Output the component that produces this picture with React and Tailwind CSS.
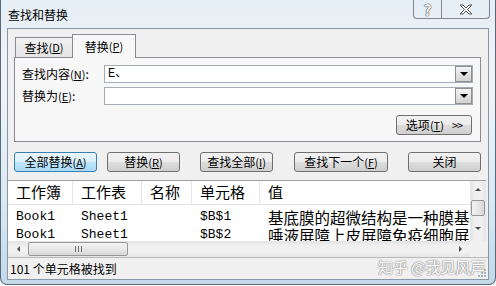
import React from 'react'

const ui = { fontFamily: '"Noto Sans CJK SC", "Liberation Sans", sans-serif' }
const mono = { fontFamily: '"Liberation Mono", "Noto Sans CJK SC", monospace' }

// underlined access key, e.g. (D)
const Key = ({ k }) => (
  <span className="text-[11px]">
    (<u>{k}</u>)
  </span>
)

const Triangle = ({ dir = 'down', size = 4, color = '#000' }) => {
  const pts = {
    down: `0,0 ${size * 2},0 ${size},${size}`,
    up: `0,${size} ${size * 2},${size} ${size},0`,
    left: `${size},0 ${size},${size * 2} 0,${size}`,
    right: `0,0 0,${size * 2} ${size},${size}`,
  }[dir]
  const w = dir === 'down' || dir === 'up' ? size * 2 : size
  const h = dir === 'down' || dir === 'up' ? size : size * 2
  return (
    <svg width={w} height={h} viewBox={`0 0 ${w} ${h}`}>
      <polygon points={pts} fill={color} />
    </svg>
  )
}

const Combo = ({ value }) => (
  <div className="w-[369px] h-[18px] border border-[#a5acb5] bg-white flex items-stretch">
    <div className="flex-1 pl-[3px] text-[12px] leading-[16px] text-black" style={mono}>
      {value}
    </div>
    <div className="w-[17px] border border-[#8e8f8f] bg-[linear-gradient(#f4f4f4,#e2e2e2_50%,#d3d3d3)] flex items-center justify-center">
      <Triangle dir="down" size={4} />
    </div>
  </div>
)

const Btn = ({ children, w, ml, focused }) => (
  <div
    className={`h-[20px] rounded-[3px] border flex items-center justify-center text-[12px] text-black ${
      focused
        ? 'border-[#3c7fb1] bg-[linear-gradient(#eaf6fd,#d9f0fc_50%,#bee6fd_50%,#a7d9f5)]'
        : 'border-[#707070] bg-[linear-gradient(#f2f2f2,#ebebeb_50%,#dddddd_50%,#cfcfcf)]'
    }`}
    style={{ width: w, marginLeft: ml }}
  >
    {children}
  </div>
)

const cols = 'grid grid-cols-[65px_69px_50px_68px_1fr]'

export default function App() {
  const rows = [
    ['Book1', 'Sheet1', '', '$B$1', '基底膜的超微结构是一种膜基底膜'],
    ['Book1', 'Sheet1', '', '$B$2', '唾液屏障上皮屏障免疫细胞屏障'],
  ]

  return (
    <div className="w-[496px] h-[286px] bg-white overflow-hidden" style={ui}>
      <div className="relative w-[496px] h-[285px] border-x border-b border-[#56687a] rounded-b-[7px] bg-[linear-gradient(180deg,#e6eef5,#eef4f9_30%,#dbe9f3_70%,#c3d9ea)]">
        {/* title bar */}
        <div className="h-[28px] flex justify-between">
          <div className="pl-[7px] pt-[6px] text-[12px] leading-[17px] text-black">查找和替换</div>
          <div className="flex mr-[5px] h-[19px]">
            <div className="w-[29px] border border-t-0 border-[#7c8894] rounded-bl-[4px] flex items-center justify-center text-[15px] font-bold text-white leading-none [text-shadow:0_0_1px_#444,0_0_1px_#444,0_0_1px_#444]">
              ?
            </div>
            <div className="w-[48px] border border-l-0 border-t-0 border-[#7c8894] rounded-br-[4px] flex items-center justify-center">
              <svg width="14" height="11" viewBox="0 0 14 11">
                <path
                  d="M1 1h3l3 3 3-3h3l-4.5 4.5L13 10h-3L7 7l-3 3H1l4.5-4.5z"
                  fill="#fff"
                  stroke="#555"
                  strokeWidth="1"
                  strokeLinejoin="round"
                />
              </svg>
            </div>
          </div>
        </div>

        {/* client area */}
        <div className="ml-[6px] w-[482px] h-[252px] border border-[#8a98a6] bg-[#f0f0f0] flex flex-col">
          {/* tabs */}
          <div className="mt-[5px] ml-[6px] h-[23px] flex items-end">
            <div className="ml-[1px] w-[58px] h-[20px] border border-b-0 border-[#898c95] bg-[linear-gradient(#f2f2f2,#e3e3e3)] flex items-center justify-center text-[12px] text-black">
              查找<Key k="D" />
            </div>
            <div className="relative z-10 -ml-px -mb-px w-[64px] h-[24px] border border-b-0 border-[#898c95] bg-[#f7f7f7] flex items-center justify-center text-[12px] text-black">
              替换<Key k="P" />
            </div>
          </div>

          {/* tab page */}
          <div className="ml-[6px] w-[467px] h-[85px] border border-[#898c95] bg-[#f7f7f7] pt-[7px] flex flex-col">
            <div className="flex items-center">
              <div className="pl-[7px] w-[89px] text-[12px] text-black">
                查找内容<Key k="N" />:
              </div>
              <Combo value="E、" />
            </div>
            <div className="mt-[4px] flex items-center">
              <div className="pl-[7px] w-[89px] text-[12px] text-black">
                替换为<Key k="E" />:
              </div>
              <Combo value="" />
            </div>
            <div className="mt-[10px] flex justify-end pr-[8px]">
              <Btn w={76} ml={0}>
                选项<Key k="T" />
                <span className="ml-[8px] text-[11px] tracking-[-1px]">&gt;&gt;</span>
              </Btn>
            </div>
          </div>

          {/* action buttons */}
          <div className="mt-[10px] flex">
            <Btn w={83} ml={6} focused>
              全部替换<Key k="A" />
            </Btn>
            <Btn w={73} ml={10}>
              替换<Key k="R" />
            </Btn>
            <Btn w={73} ml={20}>
              查找全部<Key k="I" />
            </Btn>
            <Btn w={94} ml={21}>
              查找下一个<Key k="F" />
            </Btn>
            <Btn w={73} ml={20}>
              关闭
            </Btn>
          </div>

          {/* results list */}
          <div className="mt-[8px] w-[478px] border-t border-[#a0a0a0] bg-white flex flex-col">
            <div className="h-[60px] flex">
              <div className="w-[462px] overflow-hidden">
                <div className={`${cols} h-[24px] border-b border-[#e5e5e5] text-[15px] text-black`}>
                  {['工作簿', '工作表', '名称', '单元格', '值'].map((h, i) => (
                    <div
                      key={h}
                      className={`pl-[8px] flex items-center whitespace-nowrap ${i < 4 ? 'border-r border-[#e5e5e5]' : ''}`}
                    >
                      {h}
                    </div>
                  ))}
                </div>
                <div className="pt-[2px]">
                  {rows.map((r) => (
                    <div key={r[3]} className={`${cols} h-[18px] items-center text-black`}>
                      <div className="pl-[8px] text-[13px]" style={mono}>{r[0]}</div>
                      <div className="pl-[8px] text-[13px]" style={mono}>{r[1]}</div>
                      <div className="pl-[8px] text-[13px]" style={mono}>{r[2]}</div>
                      <div className="pl-[8px] text-[13px]" style={mono}>{r[3]}</div>
                      <div className="pl-[8px] text-[15.5px] leading-[18px] whitespace-nowrap overflow-hidden">{r[4]}</div>
                    </div>
                  ))}
                </div>
              </div>
              {/* vertical scrollbar */}
              <div className="w-[16px] bg-[linear-gradient(90deg,#e3e3e3,#f0f0f0_30%,#f0f0f0_70%,#e6e6e6)] flex flex-col items-center">
                <div className="h-[17px] flex items-center justify-center">
                  <Triangle dir="up" size={3} color="#4d4d4d" />
                </div>
                <div className="mt-[2px] w-[14px] h-[16px] rounded-[2px] border border-[#979797] bg-[linear-gradient(90deg,#f3f3f3,#e8e8e8_50%,#d6d6d6)]" />
                <div className="flex-1 flex items-center justify-center">
                  <Triangle dir="down" size={3} color="#4d4d4d" />
                </div>
              </div>
            </div>
            {/* horizontal scrollbar */}
            <div className="h-[16px] flex">
              <div className="w-[462px] bg-[linear-gradient(#e3e3e3,#f0f0f0_30%,#f0f0f0_70%,#e6e6e6)] flex items-center">
                <div className="w-[20px] flex justify-center">
                  <Triangle dir="left" size={3} color="#4d4d4d" />
                </div>
                <div className="w-[100px] h-[14px] rounded-[2px] border border-[#979797] bg-[linear-gradient(#f3f3f3,#e8e8e8_50%,#d6d6d6)] flex items-center justify-center gap-[2px]">
                  <div className="w-px h-[6px] bg-[#6e6e6e]" />
                  <div className="w-px h-[6px] bg-[#6e6e6e]" />
                  <div className="w-px h-[6px] bg-[#6e6e6e]" />
                </div>
                <div className="flex-1" />
                <div className="w-[20px] flex justify-center">
                  <Triangle dir="right" size={3} color="#4d4d4d" />
                </div>
              </div>
              <div className="w-[16px] bg-[#f0f0f0]" />
            </div>
          </div>

          {/* status bar */}
          <div className="relative flex-1 border-t border-[#b8b8b8] bg-[#f0f0f0] pl-[2px] flex items-center text-[12px] text-black">
            101 个单元格被找到
            <div className="absolute right-[2px] bottom-[2px] grid grid-cols-3 gap-[1px]">
              {[0, 1, 2, 3, 4, 5, 6, 7, 8].map((i) => (
                <div key={i} className={`w-[2px] h-[2px] ${i % 3 + Math.floor(i / 3) >= 2 ? 'bg-[#a8b4bf]' : ''}`} />
              ))}
            </div>
          </div>
        </div>

        {/* watermark */}
        <div className="absolute left-[377px] top-[257px] text-[15px] leading-[20px] text-white whitespace-nowrap [text-shadow:0_0_1px_#8a8a8a,0_0_1px_#8a8a8a,0_0_2px_#aaa]">
          知乎 @我见风声
        </div>
      </div>
    </div>
  )
}
